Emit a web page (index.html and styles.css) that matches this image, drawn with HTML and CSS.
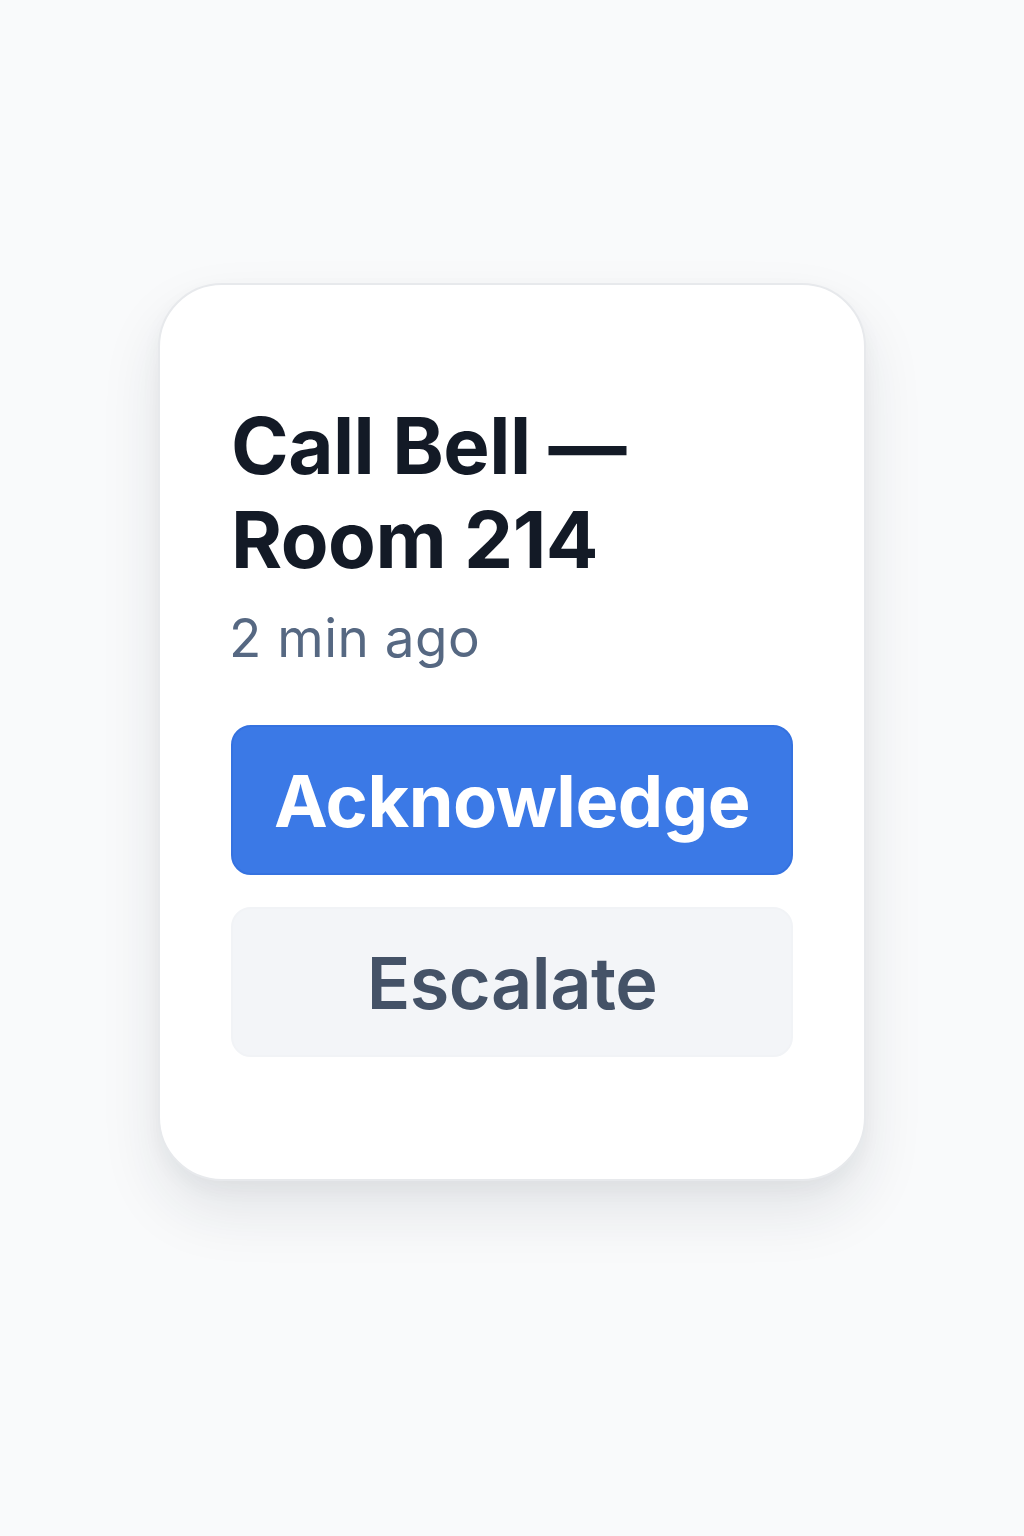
FILE: index.html
```html
<!DOCTYPE html>
<html lang="en">
<head>
    <meta charset="UTF-8">
    <meta name="viewport" content="width=device-width, initial-scale=1.0">
    <title>Call Bell</title>
    <link rel="stylesheet" href="styles.css">
</head>
<body>

    <main class="page">
        <section class="alert-card">
            <h1 class="alert-title">Call Bell —<br>Room 214</h1>
            <p class="alert-time">2 min ago</p>
            <div class="alert-actions">
                <button class="btn btn-primary">Acknowledge</button>
                <button class="btn btn-secondary">Escalate</button>
            </div>
        </section>
    </main>

</body>
</html>
```

FILE: styles.css
```css
body {
    margin: 0;
    background-color: #f9fafb;
    font-family: 'Inter', 'Noto Sans', sans-serif;
}

.page {
    padding-top: 283px;
    min-height: 1253px;
}

/* Alert card */
.alert-card {
    width: 708px;
    box-sizing: border-box;
    margin: 0 auto;
    padding: 114px 71px 122px;
    background: #ffffff;
    border: 2px solid #e7e9ec;
    border-radius: 64px;
    box-shadow: 0 30px 60px rgba(30, 41, 59, 0.10), 0 8px 20px rgba(30, 41, 59, 0.04);
}

.alert-title {
    margin: 0;
    font-size: 78px;
    line-height: 94px;
    font-weight: 700;
    color: #131a26;
    letter-spacing: -0.5px;
}

.alert-time {
    margin: 20px 0 0 -2px;
    font-size: 53px;
    line-height: 62px;
    font-weight: 400;
    color: #566882;
    letter-spacing: 0.5px;
}

/* Buttons */
.alert-actions {
    display: flex;
    flex-direction: column;
    gap: 32px;
    margin-top: 56px;
}

.btn {
    height: 150px;
    border-radius: 20px;
    font-family: inherit;
    font-size: 72px;
    cursor: pointer;
}

.btn-primary {
    background-color: #3b79e6;
    border: 2px solid #3572e0;
    color: #ffffff;
    font-weight: 700;
    letter-spacing: -0.5px;
}

.btn-secondary {
    background-color: #f3f5f8;
    border: 2px solid #f1f3f6;
    color: #445267;
    font-weight: 600;
    letter-spacing: -0.5px;
}
```
